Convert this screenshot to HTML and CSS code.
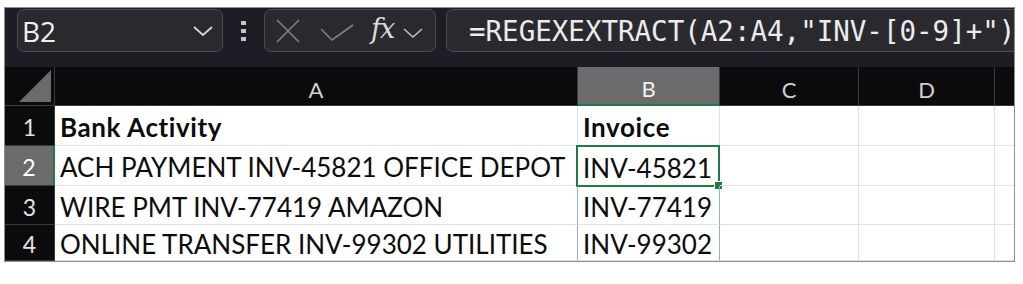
FILE: index.html
```html
<!DOCTYPE html>
<html>
<head>
    <title>Invoice Extract</title>
    <link rel="stylesheet" href="styles.css">
</head>
<body>
    <div class="sheet">
        <div class="fbar">
            <div class="namebox">
                <span class="cellref">B2</span>
                <svg class="chev" width="20" height="10" viewBox="0 0 20 10"><path d="M1 1 L10 9 L19 1" fill="none" stroke="#d8d8d8" stroke-width="1.8"/></svg>
            </div>
            <div class="grip"><i></i><i></i><i></i></div>
            <div class="fxbox">
                <svg class="ico-x" width="24" height="24" viewBox="0 0 24 24"><path d="M1 1 L23 23 M23 1 L1 23" stroke="#808080" stroke-width="1.6"/></svg>
                <svg class="ico-ok" width="34" height="17" viewBox="0 0 34 17"><path d="M1 5 L12 16 L33 1" fill="none" stroke="#808080" stroke-width="1.6"/></svg>
                <span class="fx">fx</span>
                <svg class="chev-sm" width="20" height="10" viewBox="0 0 20 10"><path d="M1 1 L10 9 L19 1" fill="none" stroke="#bdbdbd" stroke-width="1.6"/></svg>
            </div>
            <div class="formula">=REGEXEXTRACT(A2:A4,"INV-[0-9]+")</div>
        </div>

        <div class="grid">
            <div class="corner"><svg width="34" height="34" viewBox="0 0 34 34"><path d="M33 1 L33 33 L1 33 Z" fill="#6b6b6b"/></svg></div>
            <div class="colhead">A</div>
            <div class="colhead active">B</div>
            <div class="colhead">C</div>
            <div class="colhead">D</div>
            <div class="colhead last"></div>

            <div class="rowhead">1</div>
            <div class="cell bold">Bank Activity</div>
            <div class="cell bold">Invoice</div>
            <div class="cell"></div>
            <div class="cell"></div>
            <div class="cell last"></div>

            <div class="rowhead active">2</div>
            <div class="cell">ACH PAYMENT INV-45821 OFFICE DEPOT</div>
            <div class="cell selected">INV-45821<span class="handle"></span></div>
            <div class="cell"></div>
            <div class="cell"></div>
            <div class="cell last"></div>

            <div class="rowhead">3</div>
            <div class="cell">WIRE PMT INV-77419 AMAZON</div>
            <div class="cell spill">INV-77419</div>
            <div class="cell"></div>
            <div class="cell"></div>
            <div class="cell last"></div>

            <div class="rowhead">4</div>
            <div class="cell">ONLINE TRANSFER INV-99302 UTILITIES</div>
            <div class="cell spill">INV-99302</div>
            <div class="cell"></div>
            <div class="cell"></div>
            <div class="cell last"></div>
        </div>
    </div>
</body>
</html>
```

FILE: styles.css
```css
body {
    margin: 0;
    padding: 0;
    background-color: #ffffff;
    font-family: "Lato", "Liberation Sans", sans-serif;
}

.sheet {
    box-sizing: border-box;
    width: 1011px;
    height: 255px;
    margin: 7px 0 0 4px;
    border: 1px solid #8d8d8d;
    overflow: hidden;
    background-color: #ffffff;
}

/* formula bar */
.fbar {
    display: flex;
    align-items: flex-start;
    height: 59px;
    padding: 1px 0 0 12px;
    box-sizing: border-box;
    background-color: #1c1d25;
}

.namebox,
.fxbox,
.formula {
    box-sizing: border-box;
    height: 43px;
    border: 1px solid #4c4c50;
    border-radius: 7px;
    background-color: #2a2a2e;
    display: flex;
    align-items: center;
}

.namebox {
    width: 206px;
    padding: 0 9px 0 4px;
    justify-content: space-between;
}

.cellref {
    font-family: "Open Sans", sans-serif;
    font-size: 28px;
    color: #f2f2f2;
    line-height: 1;
}

.grip {
    display: flex;
    flex-direction: column;
    gap: 4px;
    margin: 12px 18px 0 18px;
}

.grip i {
    display: block;
    width: 5px;
    height: 4px;
    background-color: #c4c4c4;
}

.fxbox {
    width: 172px;
    padding-left: 11px;
}

.ico-x {
    margin-right: 20px;
}

.ico-ok {
    margin: 4px 17px 0 0;
}

.fx {
    font-family: "DejaVu Serif", serif;
    font-style: italic;
    font-size: 27px;
    color: #dadada;
    line-height: 1;
    margin: -4px 9px 0 0;
    letter-spacing: -1px;
}

.chev-sm {
    margin-top: 4px;
}

.formula {
    flex: 1;
    margin: 0 -30px 0 10px;
    padding-left: 22px;
    font-family: "DejaVu Sans Mono", monospace;
    font-size: 27.5px;
    color: #ececec;
    white-space: nowrap;
    overflow: hidden;
}

/* grid */
.grid {
    display: grid;
    grid-template-columns: 50px 523px 142px 139px 136px 1fr;
    grid-template-rows: 39px 40px 40px 39px 36px;
}

.corner,
.colhead,
.rowhead {
    box-sizing: border-box;
    background-color: #0b0b0b;
    color: #d2d2d2;
    display: flex;
    align-items: center;
    justify-content: center;
}

.corner {
    border-right: 1px solid #3a3a3a;
    border-bottom: 1px solid #3a3a3a;
    align-items: flex-end;
    justify-content: flex-end;
    padding: 0 2px 2px 0;
}

.colhead {
    border-right: 1px solid #3a3a3a;
    border-bottom: 1px solid #3a3a3a;
    font-size: 22px;
    padding-top: 6px;
}

.colhead.active {
    background-color: #6b6b6b;
    color: #f0f0f0;
    border-bottom: 2px solid #1f7a45;
}

.rowhead {
    border-right: 1px solid #3a3a3a;
    border-bottom: 1px solid #3a3a3a;
    font-size: 23px;
    color: #e4e4e4;
    padding-top: 3px;
}

.rowhead.active {
    background-color: #6b6b6b;
    color: #ffffff;
    border-right: 2px solid #1f7a45;
}

.cell {
    position: relative;
    box-sizing: border-box;
    border-right: 1px solid #e1e1e1;
    border-bottom: 1px solid #e1e1e1;
    padding: 3px 0 0 5px;
    font-size: 26px;
    color: #0c0c0c;
    display: flex;
    align-items: center;
    white-space: nowrap;
}

.cell.bold {
    font-weight: bold;
    letter-spacing: 0.6px;
}

.cell.last,
.colhead.last {
    border-right: none;
}

.cell.spill {
    border-left: 1px solid #8fb0dc;
    border-right: 1px solid #8fb0dc;
    margin-left: -1px;
}

.cell.selected {
    border: 2px solid #1f7a45;
    margin: -1px 0 -1px -2px;
    padding-left: 5px;
}

.handle {
    position: absolute;
    right: -5px;
    bottom: -5px;
    width: 7px;
    height: 7px;
    background-color: #1f7a45;
    border: 1px solid #ffffff;
}
```
